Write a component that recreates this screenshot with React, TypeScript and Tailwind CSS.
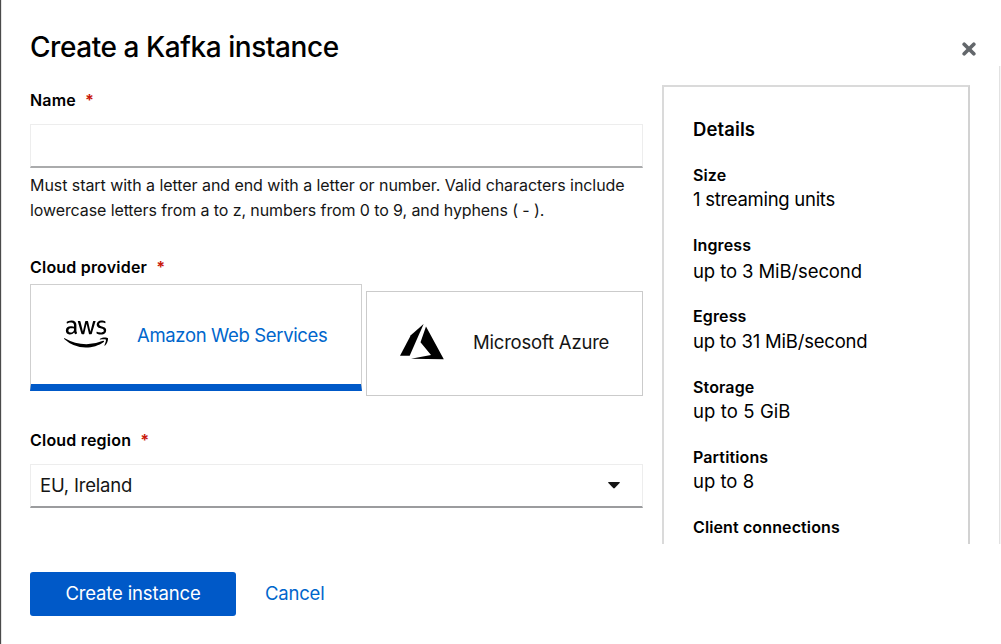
import React from "react";
import { FaAws } from "react-icons/fa";

function Label({ children }: { children: string }) {
  return (
    <div className="flex h-[26px] items-center gap-[9px] text-[16px] font-semibold leading-[26px] text-black">
      <span className="whitespace-nowrap tracking-[0.2px]">{children}</span>
      <span className="font-bold text-[#c9190b]">*</span>
    </div>
  );
}

const details = [
  { label: "Size", value: "1 streaming units", box: "h-[70px]", text: "-mt-px tracking-[-0.28px]" },
  { label: "Ingress", value: "up to 3 MiB/second", box: "h-[71px]", text: "mt-px tracking-[-0.1px]" },
  { label: "Egress", value: "up to 31 MiB/second", box: "h-[71px]", text: "tracking-[-0.2px]" },
  { label: "Storage", value: "up to 5 GiB", box: "h-[70px]", text: "-mt-px tracking-[0.1px]" },
  { label: "Partitions", value: "up to 8", box: "h-[70px]", text: "-mt-px" },
  { label: "Client connections", value: "", box: "h-[70px]", text: "" },
];

export default function App() {
  return (
    <div className="flex h-[644px] w-[1001px] flex-col overflow-hidden border-l border-[#4a4a4a] bg-white font-['Inter',sans-serif] text-[#151515]">
      <header className="flex h-[66px] items-start justify-between border-l border-[#e4e4e4] pl-7 pr-[25px]">
        <h1 className="pt-[27px] text-[28px] font-medium leading-10 tracking-[-0.44px] text-black">
          Create a Kafka instance
        </h1>
        <button className="mt-[42px]" aria-label="Close">
          <svg width="14" height="14" viewBox="0 0 14 14" fill="none" stroke="#63676b" strokeWidth="3.7" strokeLinecap="round">
            <path d="M2.2 2.2 11.8 11.8M11.8 2.2 2.2 11.8" />
          </svg>
        </button>
      </header>

      <main className="flex h-[478px] items-start overflow-hidden border-l border-[#e4e4e4] pl-7">
        <form className="w-[613px] pt-[21px]">
          <Label>Name</Label>
          <input className="mt-[11px] block h-[44px] w-full border border-b-2 border-[#ededed] border-b-[#aaabac]" />
          <p className="mt-[5px] h-[50px] whitespace-nowrap text-[16px] leading-[25px] tracking-[-0.1px]">
            <span className="tracking-[-0.06px]">
              Must start with a letter and end with a letter or number. Valid characters include
            </span>
            <br />
            lowercase letters from a to z, numbers from 0 to 9, and hyphens ( - ).
          </p>
          <div className="mt-[31px]">
            <Label>Cloud provider</Label>
          </div>
          <div className="mt-1 flex h-[113px] items-start justify-between">
            <div className="flex h-[107px] w-[332px] items-center border border-b-[7px] border-[#cfcfcf] border-b-[#0059c8] pl-[33px]">
              <FaAws className="-mt-0.5 h-[36px] w-[44px]" preserveAspectRatio="none" color="#000" />
              <span className="ml-[29px] whitespace-nowrap pt-[3px] text-[18.5px] tracking-[-0.35px] text-[#0066cc]">
                Amazon Web Services
              </span>
            </div>
            <div className="mt-[7px] flex h-[105px] w-[277px] items-center border border-[#cbcbcb] pl-[33px]">
              <svg className="-mt-1" width="44" height="36" viewBox="0 0 44 36" fill="#000">
                <path d="M23.6 0 10.8 11.2 0 31.7H9.7Z" />
                <path d="M26 2.5 20.5 18.3 31 31 11 34.8 43.8 35.3Z" />
              </svg>
              <span className="ml-[29px] whitespace-nowrap pb-0.5 text-[18.5px] tracking-[-0.2px]">
                Microsoft Azure
              </span>
            </div>
          </div>
          <div className="mt-[30px]">
            <Label>Cloud region</Label>
          </div>
          <div className="mt-[11px] flex h-[44px] items-center justify-between border border-b-2 border-[#ededed] border-b-[#9b9c9e] pl-[9px] pr-[22px]">
            <span className="text-[18.5px] tracking-[-0.2px]">EU, Ireland</span>
            <svg width="12" height="7" viewBox="0 0 12 7" fill="#151515">
              <path d="M.8 0H11.2Q12.4.2 11.6 1.1L6.8 6.1Q6 6.8 5.2 6.1L.4 1.1Q-.4.2.8 0Z" />
            </svg>
          </div>
        </form>

        <aside className="ml-[19px] mt-[19px] h-[500px] w-[308px] border-2 border-[#dadada] border-r-[#d2d2d2] pl-[29px] pt-7 text-black">
          <h2 className="h-12 text-[18.5px] font-semibold leading-7 tracking-[0.1px]">Details</h2>
          {details.map((d) => (
            <div key={d.label} className={d.box}>
              <div className="h-[25px] text-[16px] font-semibold leading-[25px] tracking-[0.12px]">{d.label}</div>
              <div className="flex">
                <div className={d.text}>
                  <div className="whitespace-nowrap text-[18.5px] leading-[25px]">{d.value}</div>
                </div>
              </div>
            </div>
          ))}
        </aside>
        <div className="ml-auto h-full w-0.5 border-l border-[#e2e2e2] bg-[#f6f6f6]" />
      </main>

      <footer className="flex h-[100px] items-start border-l border-[#e4e4e4] pl-7 pt-7">
        <button className="h-[44px] w-[206px] rounded-[3px] bg-[#0059c8] text-[18.5px] tracking-[-0.15px] text-white">
          Create instance
        </button>
        <button className="ml-[29px] h-[44px] text-[18.5px] tracking-[-0.2px] text-[#0066cc]">Cancel</button>
      </footer>
    </div>
  );
}
